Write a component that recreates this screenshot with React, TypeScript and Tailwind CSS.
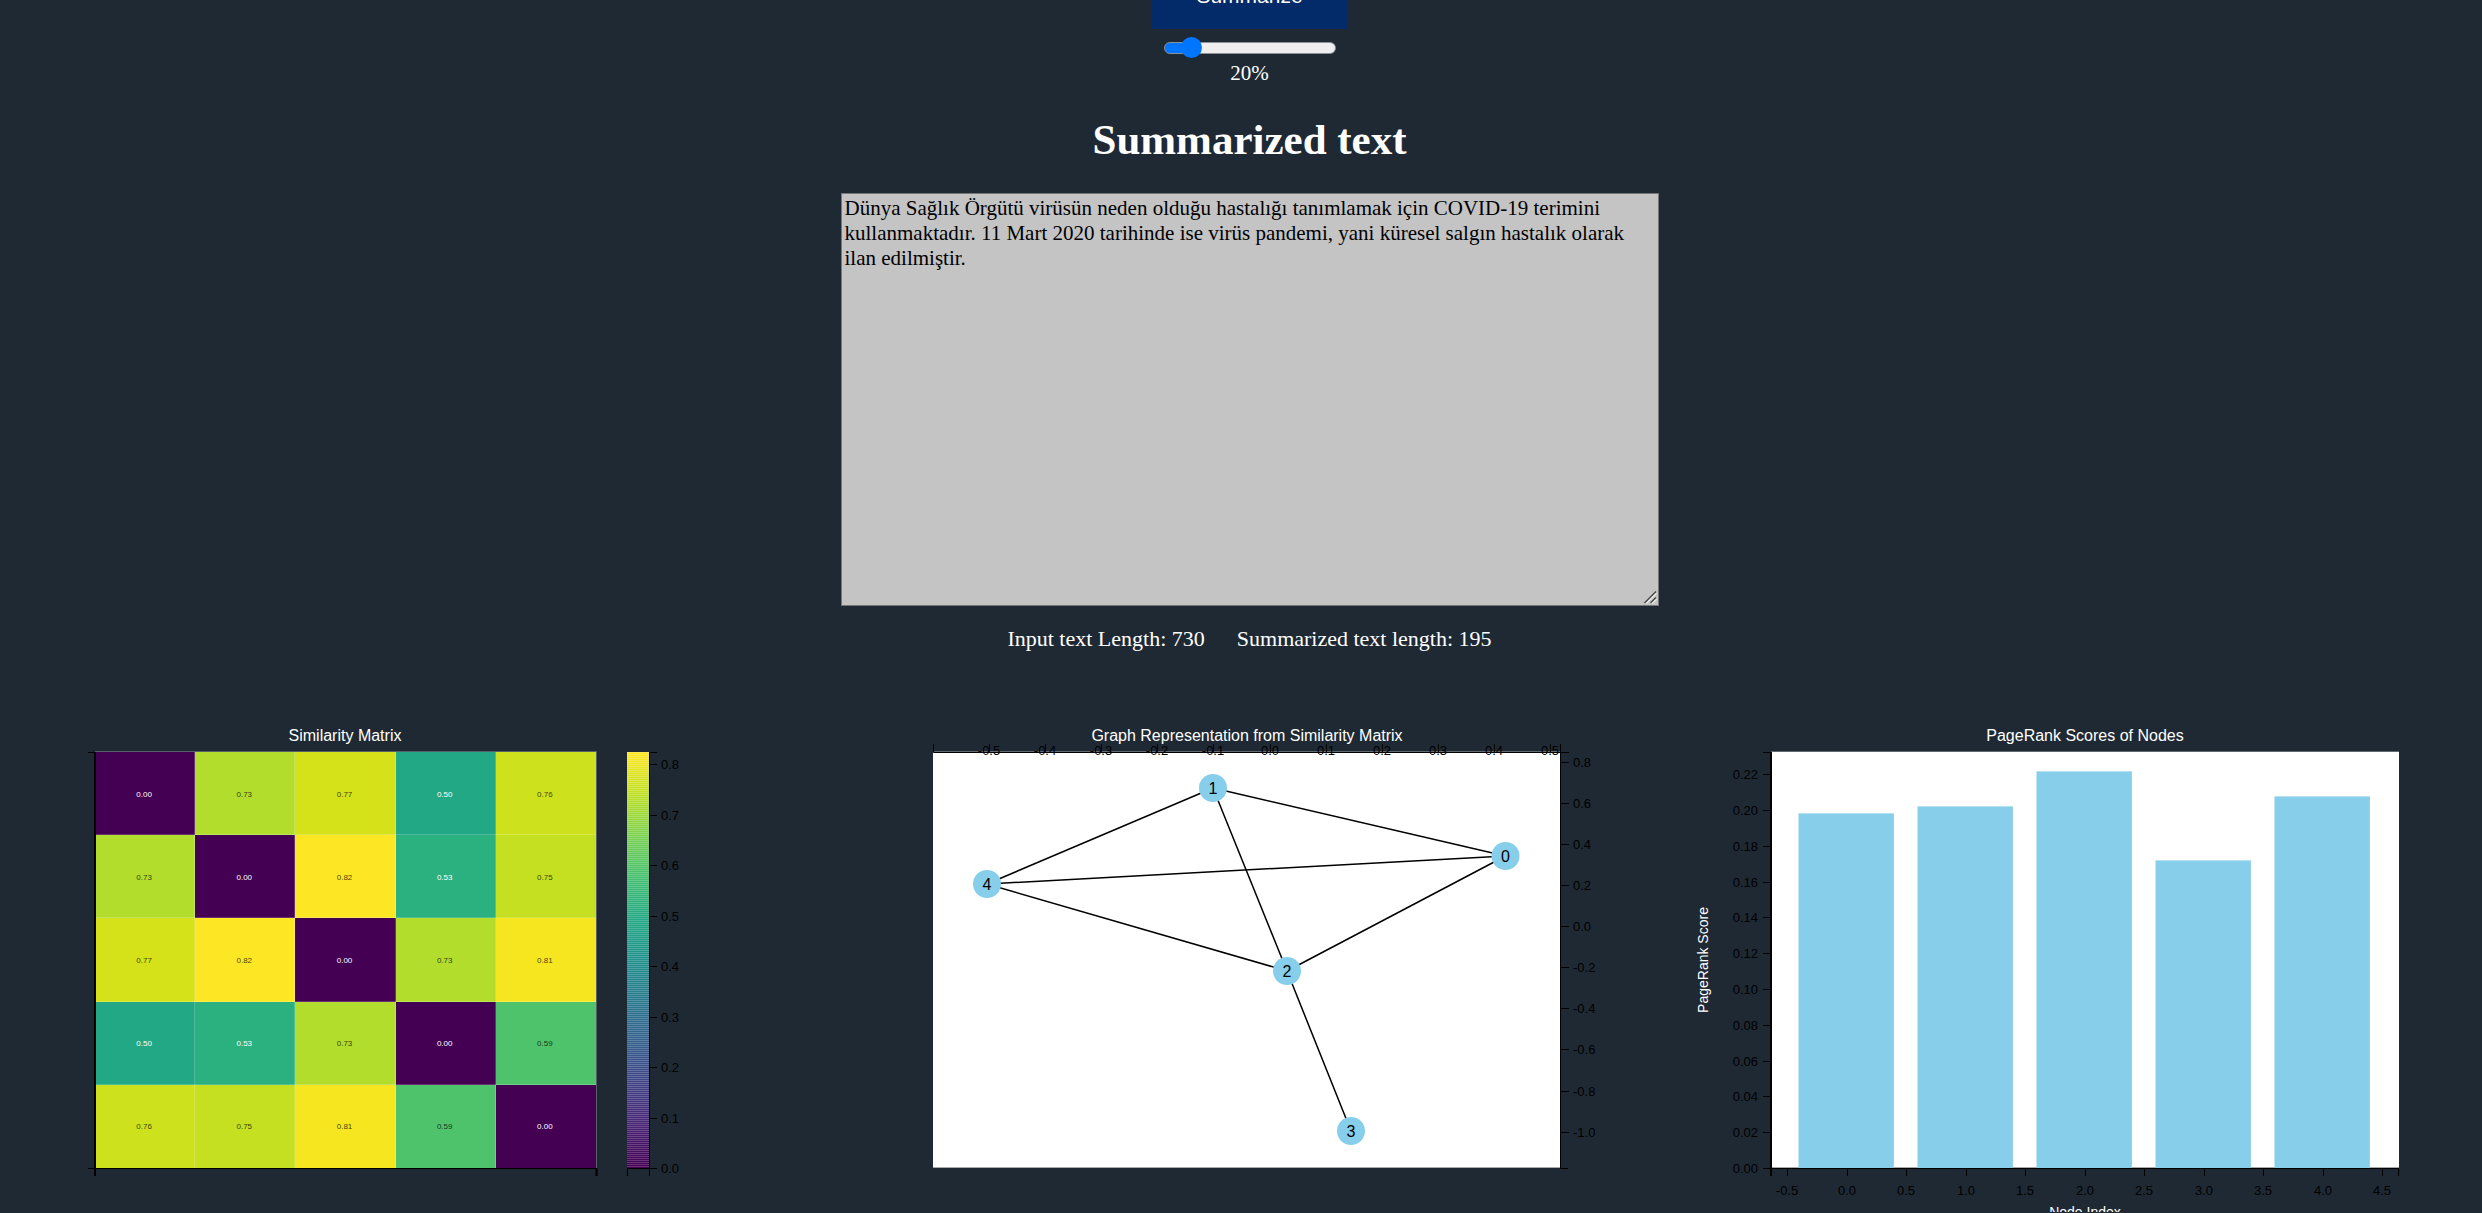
import React from "react";

const SANS = "'Liberation Sans', Arial, sans-serif";
const INK = "#000000";
const SKY = "#87ceeb";

const VIRIDIS: [number, number, number][] = [
  [68, 1, 84], [72, 36, 117], [65, 68, 135], [53, 95, 141], [42, 120, 142],
  [33, 145, 140], [34, 168, 132], [68, 191, 112], [122, 209, 81], [189, 223, 38], [253, 231, 37],
];

function viridis(t: number) {
  const p = Math.min(Math.max(t, 0), 1) * (VIRIDIS.length - 1);
  const i = Math.min(Math.floor(p), VIRIDIS.length - 2);
  const f = p - i;
  const c = VIRIDIS[i].map((v, k) => Math.round(v + (VIRIDIS[i + 1][k] - v) * f));
  return `rgb(${c[0]},${c[1]},${c[2]})`;
}

/* Plot area shared by the three charts. */
const LEFT = 83;
const RIGHT = 711;
const TOP = 42;
const BOTTOM = 458;

const cellFill: Record<string, string> = {
  "0.00": "#440154", "0.50": "#22a884", "0.53": "#2bb07f", "0.59": "#4ec36b", "0.73": "#b2dd2d",
  "0.75": "#c5e021", "0.76": "#cde11d", "0.77": "#d5e21a", "0.81": "#f6e620", "0.82": "#fde725",
};

const matrix = [
  ["0.00", "0.73", "0.77", "0.50", "0.76"],
  ["0.73", "0.00", "0.82", "0.53", "0.75"],
  ["0.77", "0.82", "0.00", "0.73", "0.81"],
  ["0.50", "0.53", "0.73", "0.00", "0.59"],
  ["0.76", "0.75", "0.81", "0.59", "0.00"],
];

function Title({ x, children }: { x: number; children: string }) {
  return <text x={x} y={31} fontSize={16} fill="#fff" textAnchor="middle">{children}</text>;
}

function Chart({ label, children }: { label: string; children: React.ReactNode }) {
  return (
    <svg role="img" aria-label={label} viewBox="0 0 794 502" className="block w-full" fontFamily={SANS}>
      {children}
    </svg>
  );
}

function SimilarityMatrix() {
  const w = 501 / 5;
  const h = (BOTTOM - TOP) / 5;
  return (
    <Chart label="Similarity Matrix">
      <Title x={333}>Similarity Matrix</Title>
      {matrix.map((row, r) =>
        row.map((v, c) => (
          <g key={`${r}-${c}`}>
            <rect x={83 + c * w} y={TOP + r * h} width={w} height={h} fill={cellFill[v]} shapeRendering="crispEdges" />
            <text x={82 + (c + 0.5) * w} y={TOP + (r + 0.5) * h + 3} fontSize={8} textAnchor="middle" fill={Number(v) < 0.55 ? "#fff" : "#000"} fillOpacity={Number(v) < 0.55 ? 1 : 0.75}>{v}</text>
          </g>
        )),
      )}
      {[1, 2, 3, 4].map((i) => (
        <path key={i} d={`M83 ${Math.round(TOP + i * h) - 0.5}H584M${Math.round(83 + i * w) - 0.5} 42V458`} stroke="#fff" strokeOpacity={0.2} fill="none" />
      ))}
      <path d="M83 41.5H585M584.5 42V458" stroke="#fff" strokeOpacity={0.25} fill="none" />
      <path d="M76 42.5H84M76 458.5H585" stroke={INK} />
      <path d="M83 42V466M584.5 458V466" stroke={INK} strokeWidth={2} />
      {Array.from({ length: 104 }, (_, i) => (
        <rect key={i} x={615} y={454 - i * 4} width={22} height={4} fill={viridis(i / 103)} />
      ))}
      {Array.from({ length: 208 }, (_, i) => (
        <rect key={i} x={615} y={456 - i * 2} width={22} height={1} fill="#fff" fillOpacity={0.2} />
      ))}
      <path d="M637.5 42.5H645M637.5 42V466M615.5 466V458.5H637" stroke={INK} fill="none" />
      {Array.from({ length: 9 }, (_, i) => {
        const y = Math.round(458 - i * 50.5);
        return (
          <g key={i}>
            <path d={`M637 ${y + 0.5}h8`} stroke={INK} />
            <text x={649} y={y + 5} fontSize={13}>{(i / 10).toFixed(1)}</text>
          </g>
        );
      })}
    </Chart>
  );
}

const nodes = [
  { x: 655.5, y: 146 }, { x: 363, y: 78 }, { x: 437, y: 261 }, { x: 501, y: 421 }, { x: 137, y: 174 },
];
const edges = [[4, 1], [4, 0], [4, 2], [1, 0], [1, 2], [0, 2], [2, 3]];

function NodeGraph() {
  return (
    <Chart label="Graph Representation from Similarity Matrix">
      <Title x={397}>Graph Representation from Similarity Matrix</Title>
      <rect x={LEFT} y={TOP} width={RIGHT - LEFT} height={BOTTOM - TOP} fill="#fff" />
      <path d="M83 457.5H711" stroke="#aaa" />
      <path d="M83 41.5H711" stroke="#60686f" />
      {edges.map(([a, b]) => (
        <line key={`${a}-${b}`} x1={nodes[a].x} y1={nodes[a].y} x2={nodes[b].x} y2={nodes[b].y} stroke={INK} strokeWidth={1.5} />
      ))}
      {nodes.map((n, i) => (
        <g key={i}>
          <circle cx={n.x} cy={n.y} r={14} fill={SKY} />
          <text x={n.x} y={n.y + 6} fontSize={16} textAnchor="middle">{i}</text>
        </g>
      ))}
      <path d="M83.5 34V42.5H719M710.5 34V458.5H718" stroke={INK} fill="none" />
      {Array.from({ length: 11 }, (_, i) => {
        const x = Math.round(139 + i * 56.1);
        return (
          <g key={i}>
            <path d={`M${x + 0.5} 34v8`} stroke={INK} />
            <text x={x} y={45} fontSize={13} textAnchor="middle">{((i - 5) / 10).toFixed(1)}</text>
          </g>
        );
      })}
      {Array.from({ length: 10 }, (_, i) => {
        const y = Math.round(52 + i * 41.07);
        return (
          <g key={i}>
            <path d={`M711 ${y + 0.5}h8`} stroke={INK} />
            <text x={723} y={y + 5} fontSize={13}>{(0.8 - i * 0.2 + 1e-9).toFixed(1)}</text>
          </g>
        );
      })}
    </Chart>
  );
}

const barTops = [103, 96, 61, 150, 86];

function PageRankBars() {
  return (
    <Chart label="PageRank Scores of Nodes">
      <Title x={397}>PageRank Scores of Nodes</Title>
      <rect x={LEFT} y={TOP} width={RIGHT - LEFT} height={BOTTOM - TOP} fill="#fff" />
      <path d="M83 457.5H711" stroke="#aaa" />
      <path d="M83 41.5H711" stroke="#60686f" />
      {barTops.map((top, i) => (
        <rect key={i} x={110.5 + i * 119} y={top + 0.4} width={95.4} height={BOTTOM - top} fill={SKY} />
      ))}
      <path d="M75 42.5H83M83 458.5H710.5V466" stroke={INK} fill="none" />
      <path d="M83 42V466" stroke={INK} strokeWidth={2} />
      {Array.from({ length: 12 }, (_, i) => {
        const y = Math.round(458 - i * 35.8);
        return (
          <g key={i}>
            <path d={`M75 ${y + 0.5}h8`} stroke={INK} />
            <text x={70} y={y + 5} fontSize={13} textAnchor="end">{(i * 0.02).toFixed(2)}</text>
          </g>
        );
      })}
      {Array.from({ length: 11 }, (_, i) => {
        const x = Math.round(99 + i * 59.5);
        return (
          <g key={i}>
            <path d={`M${x + 0.5} 458v8`} stroke={INK} />
            <text x={x} y={485} fontSize={13} textAnchor="middle">{(-0.5 + i * 0.5).toFixed(1)}</text>
          </g>
        );
      })}
      <text transform="translate(20 250) rotate(-90)" fontSize={14} fill="#fff" textAnchor="middle">PageRank Score</text>
      <text x={397} y={507} fontSize={14} fill="#fff" textAnchor="middle">Node Index</text>
    </Chart>
  );
}

export default function App() {
  const [percent, setPercent] = React.useState(20);
  const fill = ((percent - 10) / 90) * 88 + 6;
  return (
    <main className="min-h-screen overflow-hidden bg-[#1e2934] pl-3 font-['Liberation_Serif',serif] text-[21px] leading-[25px] text-white">
      <section className="flex flex-col items-center pl-[5px]">
        <button type="button" className="-mt-[37px] bg-[#032a69] px-11 py-[21px] font-['Liberation_Sans',Arial,sans-serif] leading-6">
          Summarize
        </button>
        <input
          id="percent"
          type="range"
          min={10}
          max={100}
          value={percent}
          onChange={(e) => setPercent(Number(e.target.value))}
          style={{ "--fill": `${fill}%` } as React.CSSProperties}
          className="mt-2 h-[22px] w-[172px] appearance-none bg-transparent [&::-webkit-slider-runnable-track]:h-3 [&::-webkit-slider-runnable-track]:rounded-full [&::-webkit-slider-runnable-track]:border [&::-webkit-slider-runnable-track]:border-[#8b9096] [&::-webkit-slider-runnable-track]:bg-[linear-gradient(to_right,#0075ff_var(--fill),#efefef_var(--fill))] [&::-webkit-slider-thumb]:-mt-[6px] [&::-webkit-slider-thumb]:size-[21px] [&::-webkit-slider-thumb]:appearance-none [&::-webkit-slider-thumb]:rounded-full [&::-webkit-slider-thumb]:bg-[#0075ff]"
        />
        <label htmlFor="percent" className="mt-[2px]">{percent}%</label>
        <h1 className="mt-[29px] text-[43px] font-bold leading-[50px]">
          <label htmlFor="summary">Summarized text</label>
        </h1>
        <div className="relative mt-7 w-full max-w-[818px]">
          <textarea
            id="summary"
            readOnly
            defaultValue="Dünya Sağlık Örgütü virüsün neden olduğu hastalığı tanımlamak için COVID-19 terimini kullanmaktadır. 11 Mart 2020 tarihinde ise virüs pandemi, yani küresel salgın hastalık olarak ilan edilmiştir."
            className="block h-[413px] w-full resize-y border border-[#767676] bg-[#c4c4c4] px-[3px] py-[2px] text-black outline-none [&::-webkit-resizer]:bg-transparent"
          />
          <svg viewBox="0 0 14 14" aria-hidden="true" className="pointer-events-none absolute right-[2px] bottom-[2px] size-[14px]" fill="none">
            <path d="M3 13.5L13.5 3M9 13.5L13.5 9" stroke="#eee" strokeWidth={1.3} />
            <path d="M1.5 13L13 1.5M7.5 13L13 7.5" stroke="#444" strokeWidth={1.3} />
          </svg>
        </div>
        <p className="mt-5 flex gap-8 text-[22px]">
          <span>Input text Length: 730</span>
          <span>Summarized text length: 195</span>
        </p>
      </section>
      <section className="mt-[59px] grid grid-cols-3 gap-11">
        <SimilarityMatrix />
        <NodeGraph />
        <PageRankBars />
      </section>
    </main>
  );
}
